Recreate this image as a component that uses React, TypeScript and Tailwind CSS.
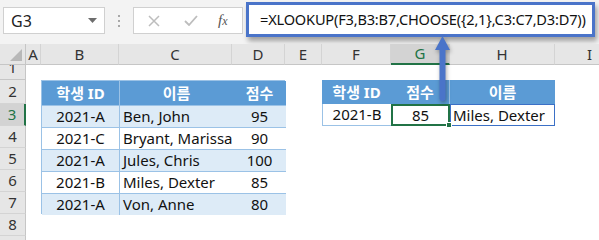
import React from "react";

const font = { fontFamily: '"Noto Sans", "Noto Sans CJK KR", sans-serif' };

const cols = ["A", "B", "C", "D", "E", "F", "G", "H", "I"];
const rows = [
  ["2021-A", "Ben, John", "95"],
  ["2021-C", "Bryant, Marissa", "90"],
  ["2021-A", "Jules, Chris", "100"],
  ["2021-B", "Miles, Dexter", "85"],
  ["2021-A", "Von, Anne", "80"],
];

function Toolbar() {
  return (
    <div className="flex h-[44px] items-start bg-[#f3f3f3]">
      <div className="ml-[3px] mt-[7px] flex h-[27px] w-[102px] items-center justify-between border border-[#d0d0d0] bg-white pl-[7px] pr-[7px] text-[16px] text-[#222]">
        <span>G3</span>
        <svg width="9" height="5" viewBox="0 0 9 5">
          <path d="M0 0h9L4.5 5z" fill="#6d6d6d" />
        </svg>
      </div>
      <div className="ml-[13px] mt-[15px] flex flex-col gap-[3px]">
        <span className="h-[2px] w-[2px] bg-[#a8a8a8]" />
        <span className="h-[2px] w-[2px] bg-[#a8a8a8]" />
        <span className="h-[2px] w-[2px] bg-[#a8a8a8]" />
      </div>
      <div className="ml-[13px] mt-[7px] flex h-[27px] w-[110px] items-center border border-[#d0d0d0] bg-white">
        <svg className="ml-[14px]" width="12" height="12" viewBox="0 0 12 12">
          <path d="M1 1l10 10M11 1L1 11" stroke="#bdbdbd" strokeWidth="1.5" />
        </svg>
        <svg className="ml-[24px]" width="14" height="11" viewBox="0 0 14 11">
          <path d="M1 6l4 4 8-9" stroke="#bdbdbd" strokeWidth="1.8" fill="none" />
        </svg>
        <span
          className="ml-[20px] text-[15px] italic text-[#555]"
          style={{ fontFamily: '"Liberation Serif", serif' }}
        >
          f<span className="text-[12px]">x</span>
        </span>
      </div>
      <div className="ml-[3px] mt-[2px] flex h-[35px] w-[349px] items-center overflow-hidden whitespace-nowrap border-[3px] border-[#4a74c9] bg-white pl-[11px] text-[14.6px] tracking-[-0.2px] text-[#111] shadow-[2px_4px_5px_rgba(0,0,0,0.35)]">
        =XLOOKUP(F3,B3:B7,CHOOSE({"{"}2,1{"}"},C3:C7,D3:D7))
      </div>
    </div>
  );
}

function ColHeader({ label }: { label: string }) {
  const sel = label === "G";
  return (
    <div
      className={
        "flex items-center justify-center border-r border-[#d4d4d4] text-[15px] " +
        (sel
          ? "border-b-2 border-b-[#217346] bg-[#d3d3d3] text-[#217346]"
          : "border-b border-b-[#c6c6c6] bg-[#e6e6e6] text-[#333]")
      }
    >
      {label}
    </div>
  );
}

function RowHeader({ n, row }: { n: number; row: number }) {
  const sel = n === 3;
  return (
    <div
      style={{ gridRowStart: row }}
      className={
        "col-start-1 flex items-center justify-center overflow-hidden border-b border-[#d4d4d4] text-[15px] " +
        (sel
          ? "border-r-2 border-r-[#217346] bg-[#d3d3d3] text-[#217346]"
          : "border-r border-r-[#c6c6c6] bg-[#e6e6e6] text-[#333]")
      }
    >
      {n}
    </div>
  );
}

export default function App() {
  return (
    <div className="relative h-[240px] w-[599px] overflow-hidden bg-white" style={font}>
      <Toolbar />
      <div className="grid grid-cols-[26px_15px_78px_113px_53px_37px_69px_59px_105px_70px] grid-rows-[21px_15px_24px_22px_22px_22px_22px_22px_22px_22px]">
        {/* corner */}
        <div className="relative border-b border-r border-[#c6c6c6] bg-[#e6e6e6]">
          <svg className="absolute bottom-[3px] right-[3px]" width="12" height="12" viewBox="0 0 12 12">
            <path d="M12 0v12H0z" fill="#b8b8b8" />
          </svg>
        </div>
        {cols.map((c) => (
          <ColHeader key={c} label={c} />
        ))}

        {/* row 1, scrolled partly under the header */}
        <div className="col-start-1 row-start-2 overflow-hidden border-b border-r border-[#c6c6c6] bg-[#e6e6e6]">
          <div className="-mt-[9px] flex h-[22px] items-center justify-center text-[15px] text-[#333]">1</div>
        </div>
        {[2, 3, 4, 5, 6, 7, 8].map((n) => (
          <RowHeader key={n} n={n} row={n + 1} />
        ))}
        <div className="col-start-1 row-start-10 border-r border-[#c6c6c6] bg-[#e6e6e6]" />

        {/* table B2:D7 */}
        <div className="col-span-3 col-start-3 row-span-6 row-start-3 grid grid-cols-[78px_113px_53px] grid-rows-[24px_22px_22px_22px_22px_22px] border border-[#9bc2e6] text-[15px] text-[#111]">
          <div className="flex items-center justify-center border-r border-[#9bc2e6] bg-[#5b9bd5] font-bold text-white">학생 ID</div>
          <div className="flex items-center justify-center bg-[#5b9bd5] font-bold text-white">이름</div>
          <div className="flex items-center justify-center bg-[#5b9bd5] font-bold text-white">점수</div>
          {rows.map((r, i) => {
            const bg = i % 2 === 0 ? "bg-[#ddebf7]" : "bg-white";
            return (
              <React.Fragment key={i}>
                <div className={"flex items-center justify-center border-r border-t border-[#9bc2e6] " + bg}>{r[0]}</div>
                <div className={"flex items-center border-t border-[#9bc2e6] pl-[3px] " + bg}>{r[1]}</div>
                <div className={"flex items-center justify-center border-t border-[#9bc2e6] " + bg}>{r[2]}</div>
              </React.Fragment>
            );
          })}
        </div>

        {/* table F2:H3 */}
        <div className="col-span-3 col-start-7 row-span-2 row-start-3 grid grid-cols-[69px_59px_105px] grid-rows-[24px_22px] text-[15px] text-[#111]">
          <div className="flex items-center justify-center bg-[#5b9bd5] font-bold text-white">학생 ID</div>
          <div className="flex items-center justify-center border-r border-[#9bc2e6] bg-[#5b9bd5] font-bold text-white">점수</div>
          <div className="flex items-center justify-center bg-[#5b9bd5] font-bold text-white">이름</div>
          <div className="flex items-center justify-center border-b border-l border-[#9bc2e6] bg-white">2021-B</div>
          <div className="relative flex items-center justify-center border-2 border-[#217346] bg-white">
            85
            <span className="absolute -bottom-[4px] -right-[4px] h-[6px] w-[6px] border border-white bg-[#217346]" />
          </div>
          <div className="flex items-center border border-[#3b70c6] bg-white pl-[2px]">Miles, Dexter</div>
        </div>
      </div>

      {/* arrow from the formula bar down to G2 */}
      <svg
        className="absolute left-[434px] top-[36px] drop-shadow-[1px_2px_2px_rgba(0,0,0,0.35)]"
        width="17"
        height="66"
        viewBox="0 0 17 66"
      >
        <path d="M8.5 0L16 14H11.5V62a3 3 0 0 1-6 0V14H1z" fill="#4a74c9" />
      </svg>
    </div>
  );
}
